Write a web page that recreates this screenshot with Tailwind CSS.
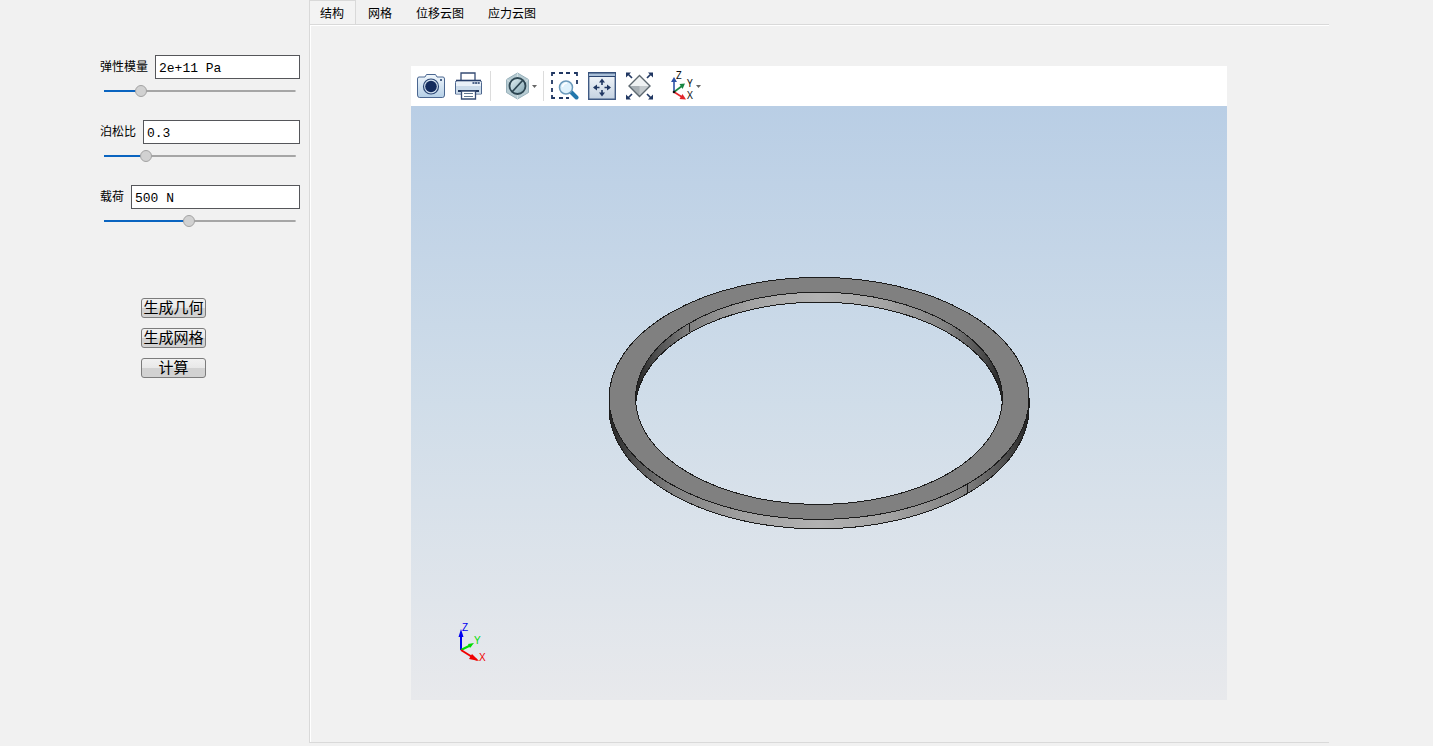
<!DOCTYPE html>
<html lang="zh-CN">
<head>
<meta charset="utf-8">
<meta name="viewport" content="width=device-width, initial-scale=1">
<title>结构分析</title>
<script src="https://cdn.jsdelivr.net/npm/@tailwindcss/browser@4"></script>
</head>
<body class="flex min-h-screen bg-[#f1f1f1] font-['Liberation_Sans','Noto_Sans_CJK_SC',sans-serif] text-xs text-black">

<aside class="w-[309px] shrink-0 pt-[55px] pr-[9px] pl-[100px]">
  <form class="flex flex-col">
    <div class="h-[65px]">
      <div class="flex h-6 items-center gap-[7px]">
        <label for="modulus" class="shrink-0">弹性模量</label>
        <input id="modulus" type="text" value="2e+11 Pa" class="h-6 min-w-0 flex-1 border border-[#55565a] bg-white px-[3px] pt-[3px] font-['Liberation_Mono',monospace] text-[13px]">
      </div>
      <div class="flex h-6 items-center px-1">
        <input type="range" aria-label="弹性模量" min="0" max="100" value="17" style="background-size:19% 2px" class="h-3 w-full appearance-none bg-[linear-gradient(#0a64c0,#0a64c0)] bg-left bg-no-repeat [&::-webkit-slider-runnable-track]:h-3 [&::-webkit-slider-runnable-track]:bg-[linear-gradient(transparent_5px,#a6a6a6_5px,#a6a6a6_7px,transparent_7px)] [&::-webkit-slider-runnable-track]:bg-[length:81%_12px] [&::-webkit-slider-runnable-track]:bg-right [&::-webkit-slider-runnable-track]:bg-no-repeat [&::-webkit-slider-thumb]:size-3 [&::-webkit-slider-thumb]:appearance-none [&::-webkit-slider-thumb]:rounded-full [&::-webkit-slider-thumb]:border [&::-webkit-slider-thumb]:border-[#a3a3a3] [&::-webkit-slider-thumb]:bg-[#d1d1d1]">
      </div>
    </div>
    <div class="h-[65px]">
      <div class="flex h-6 items-center gap-[7px]">
        <label for="poisson" class="shrink-0">泊松比</label>
        <input id="poisson" type="text" value="0.3" class="h-6 min-w-0 flex-1 border border-[#55565a] bg-white px-[3px] pt-[3px] font-['Liberation_Mono',monospace] text-[13px]">
      </div>
      <div class="flex h-6 items-center px-1">
        <input type="range" aria-label="泊松比" min="0" max="100" value="20" style="background-size:22% 2px" class="h-3 w-full appearance-none bg-[linear-gradient(#0a64c0,#0a64c0)] bg-left bg-no-repeat [&::-webkit-slider-runnable-track]:h-3 [&::-webkit-slider-runnable-track]:bg-[linear-gradient(transparent_5px,#a6a6a6_5px,#a6a6a6_7px,transparent_7px)] [&::-webkit-slider-runnable-track]:bg-[length:78%_12px] [&::-webkit-slider-runnable-track]:bg-right [&::-webkit-slider-runnable-track]:bg-no-repeat [&::-webkit-slider-thumb]:size-3 [&::-webkit-slider-thumb]:appearance-none [&::-webkit-slider-thumb]:rounded-full [&::-webkit-slider-thumb]:border [&::-webkit-slider-thumb]:border-[#a3a3a3] [&::-webkit-slider-thumb]:bg-[#d1d1d1]">
      </div>
    </div>
    <div class="h-[65px]">
      <div class="flex h-6 items-center gap-[7px]">
        <label for="load" class="shrink-0">载荷</label>
        <input id="load" type="text" value="500 N" class="h-6 min-w-0 flex-1 border border-[#55565a] bg-white px-[3px] pt-[3px] font-['Liberation_Mono',monospace] text-[13px]">
      </div>
      <div class="flex h-6 items-center px-1">
        <input type="range" aria-label="载荷" min="0" max="100" value="44" style="background-size:45% 2px" class="h-3 w-full appearance-none bg-[linear-gradient(#0a64c0,#0a64c0)] bg-left bg-no-repeat [&::-webkit-slider-runnable-track]:h-3 [&::-webkit-slider-runnable-track]:bg-[linear-gradient(transparent_5px,#a6a6a6_5px,#a6a6a6_7px,transparent_7px)] [&::-webkit-slider-runnable-track]:bg-[length:55%_12px] [&::-webkit-slider-runnable-track]:bg-right [&::-webkit-slider-runnable-track]:bg-no-repeat [&::-webkit-slider-thumb]:size-3 [&::-webkit-slider-thumb]:appearance-none [&::-webkit-slider-thumb]:rounded-full [&::-webkit-slider-thumb]:border [&::-webkit-slider-thumb]:border-[#a3a3a3] [&::-webkit-slider-thumb]:bg-[#d1d1d1]">
      </div>
    </div>
    <div class="ml-[41px] flex w-[65px] flex-col gap-[10px] pt-12">
      <button type="button" class="flex h-5 items-center justify-center rounded-[3px] border border-[#7c7c7c] bg-linear-to-b from-[#f1f1f1] from-0% via-[#e8e8e8] via-50% to-[#d2d2d2] to-50% pb-px text-[15px] whitespace-nowrap">生成几何</button>
      <button type="button" class="flex h-5 items-center justify-center rounded-[3px] border border-[#7c7c7c] bg-linear-to-b from-[#f1f1f1] from-0% via-[#e8e8e8] via-50% to-[#d2d2d2] to-50% pb-px text-[15px] whitespace-nowrap">生成网格</button>
      <button type="button" class="flex h-5 items-center justify-center rounded-[3px] border border-[#7c7c7c] bg-linear-to-b from-[#f1f1f1] from-0% via-[#e8e8e8] via-50% to-[#d2d2d2] to-50% pb-px text-[15px] whitespace-nowrap">计算</button>
    </div>
  </form>
</aside>

<main class="mr-[104px] mb-[3px] flex min-w-0 flex-1 flex-col">
  <div role="tablist" class="flex h-6">
    <button role="tab" aria-selected="true" class="border border-b-0 border-[#d9d9d9] bg-[#f3f3f3] pt-[3px] pr-[11px] pl-[10px]">结构</button>
    <button role="tab" aria-selected="false" class="px-3 pt-[3px]">网格</button>
    <button role="tab" aria-selected="false" class="px-3 pt-[3px]">位移云图</button>
    <button role="tab" aria-selected="false" class="px-3 pt-[3px]">应力云图</button>
  </div>

  <section role="tabpanel" aria-label="结构" class="flex flex-1 flex-col border border-r-0 border-[#d9d9d9] pr-[102px] pb-[42px] pl-[101px] shadow-[inset_1px_1px_0_#fff]">
    <div class="mt-[41px] flex flex-1 flex-col">
      <div role="toolbar" aria-label="视图工具" class="flex h-10 items-center bg-white pl-[6px]">
        <button aria-label="截图">
          <svg width="28" height="28" viewBox="0 0 28 28">
            <defs><linearGradient id="cam" x2="0" y2="1"><stop stop-color="#f1f7fc"/><stop offset="1" stop-color="#b5cfe6"/></linearGradient></defs>
            <path d="M2 5H8L9.500 2.500H18.500L20 5H26Q27.500 5 27.500 7V23Q27.500 25.500 25.500 25.500H2.500Q.5 25.500 .5 23V7Q.5 5 2 5Z" fill="url(#cam)" stroke="#4a6690"/>
            <circle cx="14" cy="14.500" r="7.500" fill="#d5e3f0" stroke="#2c4775" stroke-width="1.200"/><circle cx="14" cy="14.500" r="5.800" fill="#132b5d"/><circle cx="24" cy="8" r="1" fill="#1b3764"/>
          </svg>
        </button>
        <button aria-label="打印" class="ml-[10px]">
          <svg width="27" height="28" viewBox="0 0 27 28">
            <path d="M6 10V1H20V10" fill="#fff" stroke="#354b73" stroke-width="1.300"/>
            <path d="M2 8.500H25Q26.500 8.500 26.500 10.500V22H.5V10.500Q.5 8.500 2 8.500Z" fill="#eaf1f8" stroke="#4d678f"/><path d="M1 14H26V21.500H1Z" fill="#cbdbea"/>
            <path d="M1 8.500H26" stroke="#273e69" stroke-width="1.600"/><path d="M17.500 11H25" stroke="#1d3765" stroke-width="1.500" stroke-dasharray="2 .6"/>
            <path d="M3 19H24" stroke="#24395f" stroke-width="2"/><path d="M6.500 19H20.500V27H6.500Z" fill="#fff" stroke="#354b73" stroke-width="1.300"/><path d="M9 21.500H18M9 24.500H18" stroke="#60768f"/>
          </svg>
        </button>
        <div class="mr-[14px] ml-2 h-[30px] w-px bg-[#dcdcdc]"></div>
        <button aria-label="显示样式" class="flex items-center gap-[2px]">
          <svg width="25" height="28" viewBox="0 0 25 28">
            <defs><linearGradient id="ball" x2="1" y2="1"><stop stop-color="#e5f3f6"/><stop offset="1" stop-color="#7fa3b0"/></linearGradient></defs>
            <path d="M12.500 1L23.500 7.500V20.500L12.500 27L1.500 20.500V7.500Z" fill="#b7ccd3" stroke="#98b1bb"/><path d="M12.500 1V27M1.500 7.500L12.500 14L23.500 7.500" fill="none" stroke="#d3e0e4"/>
            <circle cx="12.500" cy="14" r="8" fill="url(#ball)" stroke="#2d4652" stroke-width="1.800"/><path d="M18 8L7 20" stroke="#2d4652" stroke-width="1.800"/>
          </svg>
          <svg width="5" height="3" viewBox="0 0 5 3"><path d="M0 0H5L2.500 3Z" fill="#666"/></svg>
        </button>
        <div class="mr-[7px] ml-[6px] h-[30px] w-px bg-[#dcdcdc]"></div>
        <button aria-label="框选缩放">
          <svg width="28" height="28" viewBox="0 0 28 28">
            <path d="M1 4V1H4M8 1H12M15 1H19M23 1H26V4M1 8V12M1 16V20M26 8V12M1 23V26H4M8 26H12M15 26H18" fill="none" stroke="#203762" stroke-width="1.800"/>
            <path d="M20 20L25.500 25.500" stroke="#2378ac" stroke-width="4" stroke-linecap="round"/><circle cx="15" cy="15.500" r="6.500" fill="#dff2fc" stroke="#6b9abb" stroke-width="1.500"/><path d="M11.500 15Q12 11.500 16 11" fill="none" stroke="#fff" stroke-width="1.500"/>
          </svg>
        </button>
        <button aria-label="适合窗口" class="ml-[9px]">
          <svg width="28" height="28" viewBox="0 0 28 28">
            <defs><linearGradient id="win" x2="0" y2="1"><stop stop-color="#f5f8fb"/><stop offset="1" stop-color="#c4d2e1"/></linearGradient></defs>
            <path d="M.7 .7H27.300V27.300H.7Z" fill="url(#win)" stroke="#405a83" stroke-width="1.400"/><path d="M1 1H27V4H1Z" fill="#a9bfd7"/><path d="M0 1H28M1 4.500H27" stroke="#2b446f"/>
            <path d="M14 8V13M14 18V22M6.500 15.500H11.500M16.500 15.500H21.500" stroke="#203762" stroke-width="1.600"/>
            <path d="M11 10.500L14 6.500L17 10.500ZM11 20.500L14 24.500L17 20.500ZM9 12.500L5 15.500L9 18.500ZM19 12.500L23 15.500L19 18.500Z" fill="#203762"/>
          </svg>
        </button>
        <button aria-label="缩放到实体" class="ml-[10px]">
          <svg width="27" height="28" viewBox="0 0 27 28">
            <path d="M13.500 3.500L24 14L13.500 24.500L3 14Z" fill="#eff2f3"/><path d="M3 14H24L13.500 24.500Z" fill="#a8b0b5"/><path d="M13.500 14H24L13.500 24.500Z" fill="#c4cacd"/><path d="M13.500 3.500L24 14L13.500 24.500L3 14Z" fill="none" stroke="#5c676f" stroke-width="1.400"/>
            <path d="M2 2L6 6M25 2L21 6M2 26L6 22M25 26L21 22" stroke="#203762" stroke-width="1.700"/><path d="M0 .5H5L0 5.500ZM27 .5H22L27 5.500ZM0 27.500H5L0 22.500ZM27 27.500H22L27 22.500Z" fill="#203762"/>
          </svg>
        </button>
        <button aria-label="视图方向" class="ml-[18px] flex items-center gap-[2px]">
          <svg width="23" height="36" viewBox="0 -2 23 36" class="font-['Noto_Sans',sans-serif]">
            <path d="M3 22V10" stroke="#2d52a5" stroke-width="1.600"/><path d="M0 12L3 7L6 12Z" fill="#2d52a5"/>
            <path d="M3 22L11 16" stroke="#168642" stroke-width="1.600"/><path d="M8.500 14L14 13.500L11.500 19Z" fill="#168642"/>
            <path d="M3 22L11 27" stroke="#e4252a" stroke-width="1.600"/><path d="M11.500 24L15 29.500L8.500 29Z" fill="#e4252a"/><circle cx="3" cy="22" r="1.300" fill="#111"/>
            <text x="5" y="9" font-size="10" fill="#111">Z</text><text x="16" y="17" font-size="10" fill="#111">Y</text><text x="16" y="29" font-size="10" fill="#111">X</text>
          </svg>
          <svg width="5" height="3" viewBox="0 0 5 3"><path d="M0 0H5L2.500 3Z" fill="#666"/></svg>
        </button>
      </div>

      <div class="flex-1 bg-linear-to-b from-[#b9cee5] via-[#d0dde9] to-[#e8e9ec]">
        <svg viewBox="0 0 816 594" class="block w-full font-['Liberation_Sans',sans-serif]" role="img" aria-label="圆环模型">
          <defs>
            <linearGradient id="inner" gradientUnits="userSpaceOnUse" x1="224" x2="592"><stop stop-color="#222"/><stop offset=".06" stop-color="#505050"/><stop offset=".15" stop-color="#808080"/><stop offset=".32" stop-color="#a4a4a4"/><stop offset=".5" stop-color="#b2b2b2"/><stop offset=".68" stop-color="#a4a4a4"/><stop offset=".85" stop-color="#808080"/><stop offset=".94" stop-color="#505050"/><stop offset="1" stop-color="#222"/></linearGradient>
            <linearGradient id="outer" gradientUnits="userSpaceOnUse" x1="198" x2="618"><stop stop-color="#222"/><stop offset=".06" stop-color="#505050"/><stop offset=".15" stop-color="#808080"/><stop offset=".32" stop-color="#a0a0a0"/><stop offset=".5" stop-color="#b2b2b2"/><stop offset=".68" stop-color="#a0a0a0"/><stop offset=".85" stop-color="#808080"/><stop offset=".94" stop-color="#505050"/><stop offset="1" stop-color="#222"/></linearGradient>
          </defs>
          <g stroke="#1c1c1c" shape-rendering="crispEdges">
            <path d="M198 292.400V301.900A210 121 0 0 0 618 301.900V292.400A210 121 0 0 1 198 292.400Z" fill="url(#outer)"/>
            <path fill-rule="evenodd" d="M198 292.400A210 121 0 0 1 618 292.400A210 121 0 0 1 198 292.400ZM224.500 292.400A183.500 106 0 0 1 591.500 292.400A183.500 106 0 0 1 224.500 292.400Z" fill="#808080"/>
            <path d="M224.700 297.150A183.500 106 0 1 1 591.300 297.150A183.500 106 0 0 0 224.700 297.150Z" fill="url(#inner)"/>
            <path d="M278.500 217V226M556.500 378V387"/>
          </g>
          <g stroke-width="2">
            <path d="M50 544V526" stroke="#0000f0"/><path d="M47.500 531L50 523L52.500 531Z" fill="#0000f0"/>
            <path d="M50 544L60 539" stroke="#00dc00"/><path d="M57 538L63 537L59 542Z" fill="#00dc00"/>
            <path d="M50 544L66 554" stroke="#f00000"/><path d="M61 548L68 555L58 553Z" fill="#f00000"/>
          </g>
          <text x="51" y="525" font-size="10" fill="#0000f0">Z</text><text x="63" y="538" font-size="10" fill="#00dc00">Y</text><text x="68" y="555" font-size="10" fill="#f00000">X</text>
        </svg>
      </div>
    </div>
  </section>
</main>
</body>
</html>
